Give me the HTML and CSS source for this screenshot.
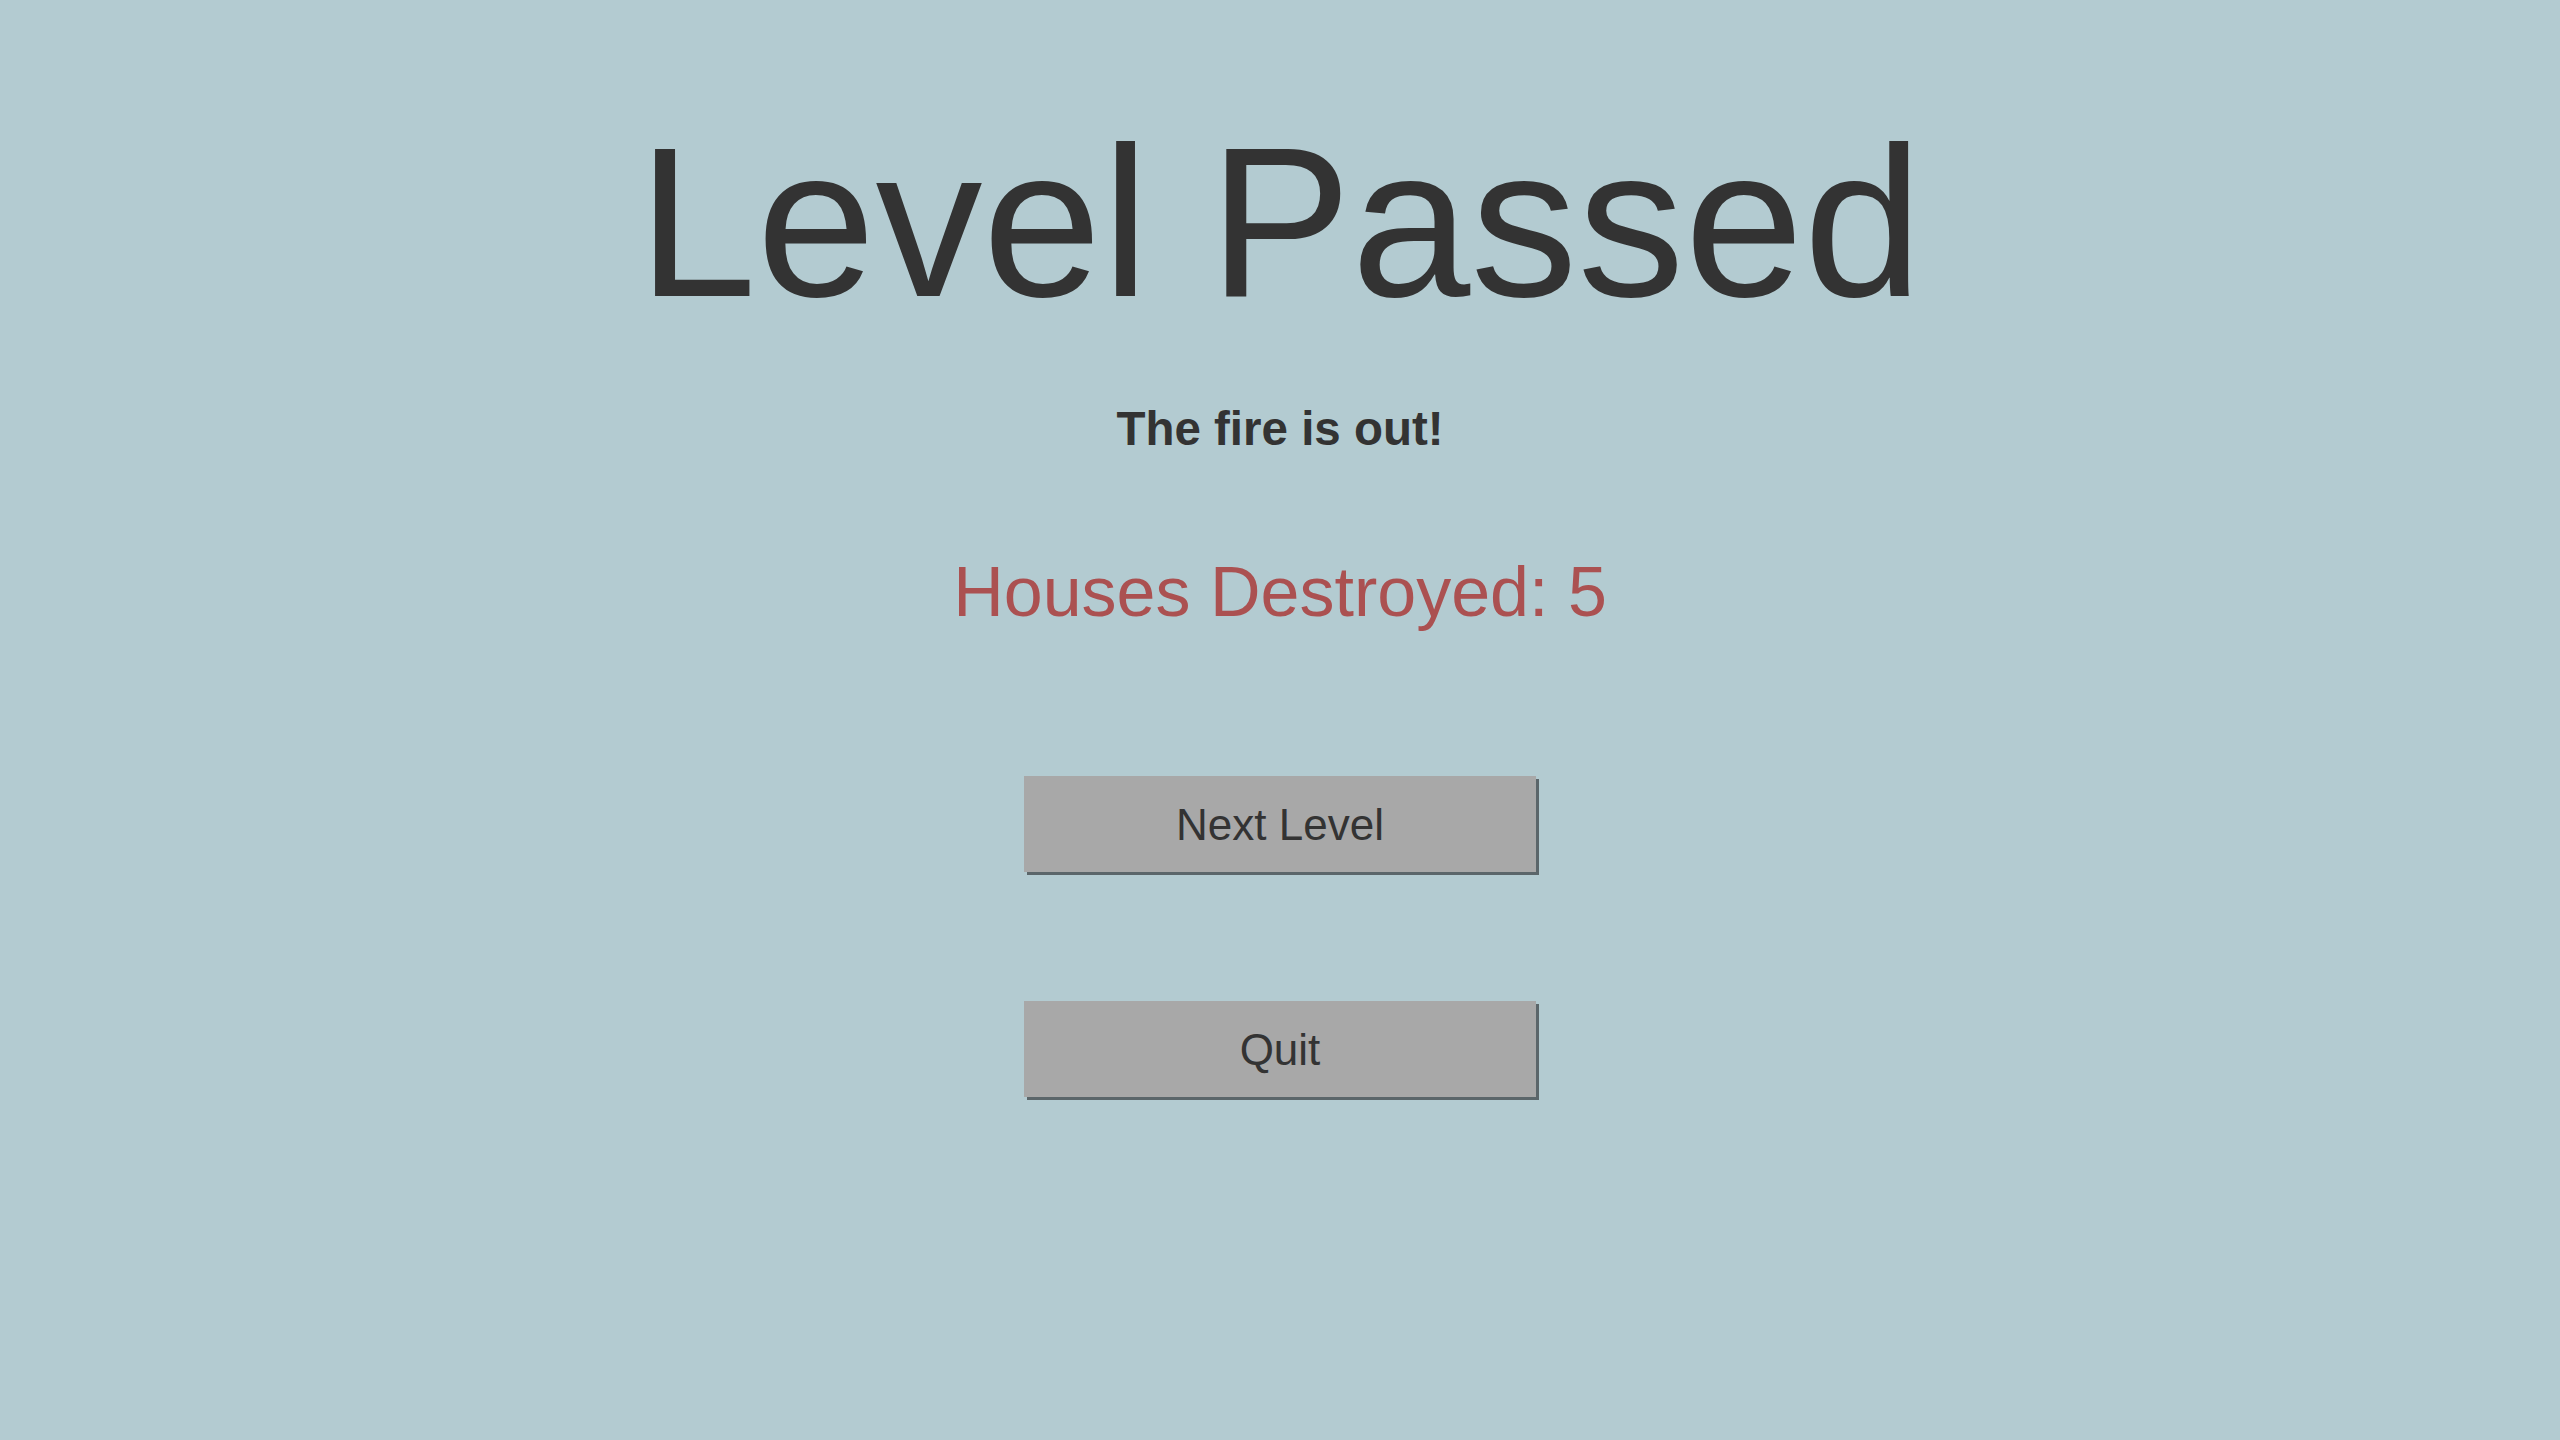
FILE: index.html
```html
<!DOCTYPE html>
<html lang="en">
<head>
<meta charset="utf-8">
<title>Level Passed</title>
<link rel="stylesheet" href="styles.css">
</head>
<body>
<main class="screen">
  <h1 class="title">Level Passed</h1>
  <p class="subtitle">The fire is out!</p>
  <p class="stat">Houses Destroyed: 5</p>
  <div class="actions">
    <button class="btn" type="button">Next Level</button>
    <button class="btn" type="button">Quit</button>
  </div>
</main>
</body>
</html>
```
FILE: styles.css
```css
html, body {
  margin: 0;
  padding: 0;
  height: 100%;
}
body {
  background: #b3cbd1;
  font-family: "Liberation Sans", Arial, sans-serif;
  color: #333333;
}
.screen {
  display: flex;
  flex-direction: column;
  align-items: center;
  padding-top: 115px;
}
.title {
  margin: 0;
  font-size: 214px;
  font-weight: 400;
  line-height: 1;
  color: #333333;
}
.subtitle {
  margin: 76px 0 0;
  font-size: 47.5px;
  font-weight: 700;
  line-height: 1;
}
.stat {
  margin: 104px 0 0;
  font-size: 70px;
  line-height: 1;
  color: #ab5151;
}
.actions {
  margin-top: 149px;
  display: flex;
  flex-direction: column;
  gap: 129px;
}
.btn {
  width: 512px;
  height: 96px;
  border: none;
  border-radius: 0;
  background: #a8a8a8;
  box-shadow: 3px 3px 0 #5b666a;
  font-family: "Liberation Sans", Arial, sans-serif;
  font-size: 44px;
  color: #333333;
  padding: 2px 0 0;
  cursor: pointer;
}
```
